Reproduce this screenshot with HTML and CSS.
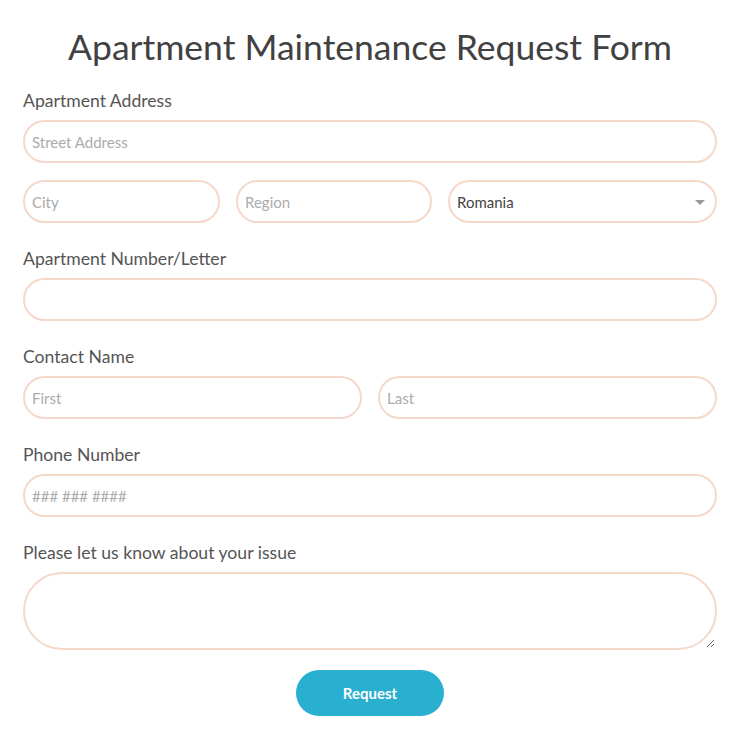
FILE: index.html
```html
<!DOCTYPE html>
<html>
<head>
<meta charset="utf-8">
<link rel="stylesheet" href="styles.css">
</head>
<body>
<form class="form">
  <h1 class="title">Apartment Maintenance Request Form</h1>
  <div class="field">
    <label class="label">Apartment Address</label>
    <input class="input" type="text" placeholder="Street Address">
    <div class="row row-3">
      <input class="input" type="text" placeholder="City">
      <input class="input" type="text" placeholder="Region">
      <div class="select-wrap">
        <select class="input select"><option>Romania</option></select>
        <span class="arrow"></span>
      </div>
    </div>
  </div>
  <div class="field">
    <label class="label">Apartment Number/Letter</label>
    <input class="input" type="text">
  </div>
  <div class="field">
    <label class="label">Contact Name</label>
    <div class="row row-2">
      <input class="input" type="text" placeholder="First">
      <input class="input" type="text" placeholder="Last">
    </div>
  </div>
  <div class="field">
    <label class="label">Phone Number</label>
    <input class="input" type="text" placeholder="### ### ####">
  </div>
  <div class="field">
    <label class="label">Please let us know about your issue</label>
    <textarea class="input textarea"></textarea>
  </div>
  <div class="actions">
    <button class="button" type="button">Request</button>
  </div>
</form>
</body>
</html>
```
FILE: styles.css
```css
* { box-sizing: border-box; }
html, body { margin: 0; background: #fff; }
body {
  font-family: Lato, "Open Sans", sans-serif;
  color: #555;
}
.form {
  padding: 24px 23px 0 23px;
  display: flex;
  flex-direction: column;
}
.title {
  margin: 0 0 19px;
  text-align: center;
  font-weight: 400;
  font-size: 35.5px;
  line-height: 46px;
  color: #414141;
}
.field {
  display: flex;
  flex-direction: column;
  margin-bottom: 24px;
}
.label {
  font-size: 17.6px;
  line-height: 24px;
  color: #555;
  margin-bottom: 7px;
}
.input {
  display: block;
  width: 100%;
  height: 43px;
  border: 2px solid #f6d8cb;
  border-radius: 22px;
  padding: 0 7px;
  font-family: Lato, sans-serif;
  font-size: 15px;
  color: #555;
  background: #fff;
  outline: none;
}
.input::placeholder { color: #ababab; }
.row {
  display: grid;
  gap: 16px;
  margin-top: 17px;
}
.row-3 { grid-template-columns: 197px 196px 1fr; }
.row-2 { grid-template-columns: 1fr 1fr; margin-top: 0; }
.select-wrap { position: relative; }
.select {
  appearance: none;
  -webkit-appearance: none;
  color: #444;
}
.arrow {
  position: absolute;
  right: 12px;
  top: 20px;
  width: 0;
  height: 0;
  border-left: 5px solid transparent;
  border-right: 5px solid transparent;
  border-top: 5px solid #999;
}
.textarea {
  height: 78px;
  border-radius: 39px;
  padding: 10px 12px;
  resize: vertical;
}
.actions {
  display: flex;
  justify-content: center;
  margin-top: -4px;
}
.button {
  width: 148px;
  height: 46px;
  border: none;
  border-radius: 23px;
  background: #29b0d0;
  color: #fff;
  font-family: Lato, sans-serif;
  font-weight: 700;
  font-size: 15px;
  cursor: pointer;
}
```
